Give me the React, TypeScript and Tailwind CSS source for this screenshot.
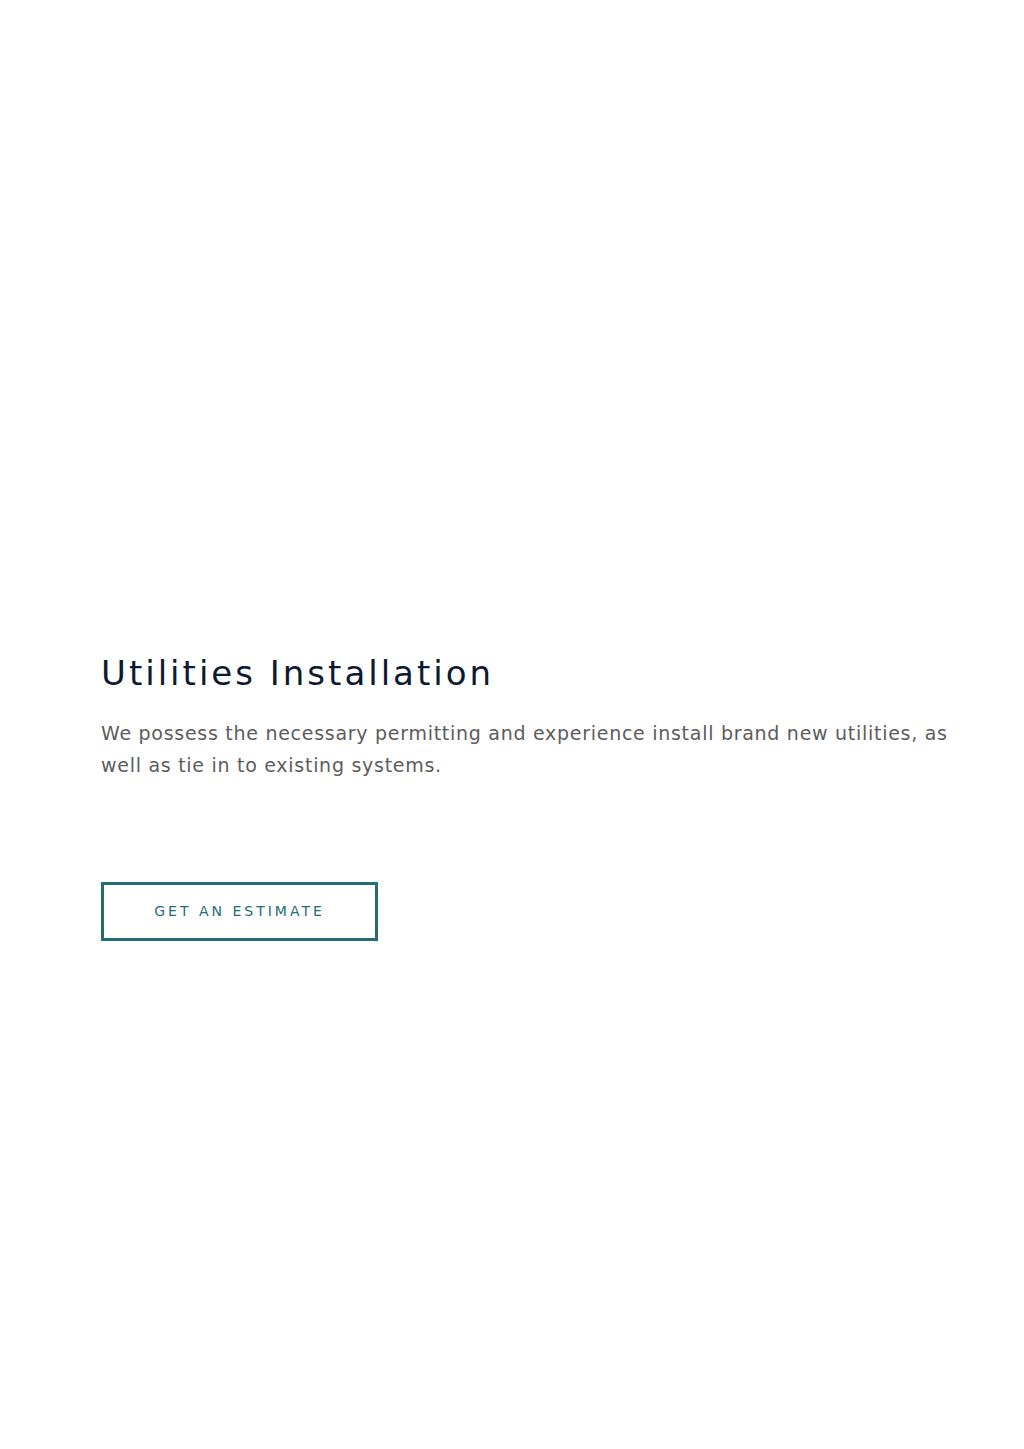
export default function App() {
  return (
    <div className="w-[1024px] h-[1449px] bg-white" style={{ fontFamily: '"DejaVu Sans", sans-serif' }}>
      <div className="pt-[652px] pl-[101px] pr-[64px] flex flex-col items-start">
        <h1 className="text-[34px] leading-[42px] tracking-[3px] text-[#0c1a33] font-normal">Utilities Installation</h1>
        <p className="mt-[23px] text-[19px] leading-[32px] tracking-[0.72px] text-[#5c5c5c]">
          We possess the necessary permitting and experience install brand new utilities, as well as tie in to existing systems.
        </p>
        <a className="mt-[101px] w-[277px] h-[59px] border-[3px] border-[#236c78] flex items-center justify-center text-[14px] tracking-[3px] text-[#236c78]">
          GET AN ESTIMATE
        </a>
      </div>
    </div>
  );
}
